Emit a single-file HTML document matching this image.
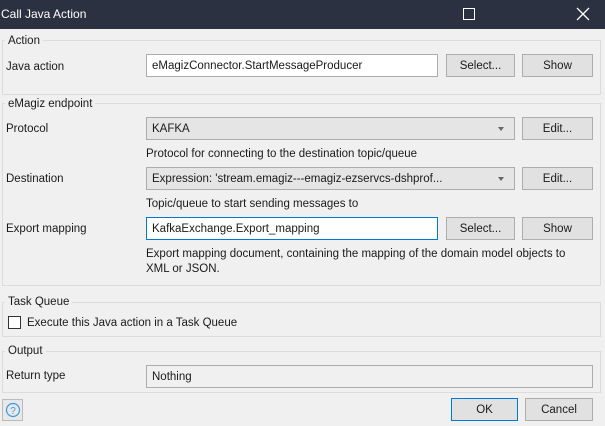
<!DOCTYPE html>
<html><head><style>
*{box-sizing:border-box;margin:0;padding:0}
body{width:605px;height:426px;background:#f0f0f0;font-family:"Liberation Sans",sans-serif;font-size:11.5px;color:#1a1a1a;position:relative;overflow:hidden}
.a{position:absolute;white-space:nowrap}
.tb{left:0;top:0;width:605px;height:29px;background:#2b3140;color:#fff;font-size:12px;line-height:29px;padding-left:1px}
.g{position:absolute;border:1px solid #dcdcdc;left:2px;width:599px}
.gl{position:absolute;background:#f0f0f0;padding:0 3px;left:5px}
.in{position:absolute;border:1px solid #acacac;background:#f0f0f0;height:23px;line-height:23px;padding-left:5px}
.w{background:#fff}
.btn{position:absolute;border:1px solid #adadad;background:#e1e1e1;height:23px;line-height:23px;text-align:center}
.cb{background:#e5e5e5}
.arr{position:absolute;right:10px;top:9px;width:0;height:0;border-left:3px solid transparent;border-right:3px solid transparent;border-top:4px solid #666}
</style></head><body>
<div class="a tb">Call Java Action</div>
<div class="a" style="left:463px;top:8px;width:12px;height:12px;border:1.3px solid #fff"></div>
<svg class="a" style="left:576px;top:7px" width="14" height="14"><path d="M1 1L13 13M13 1L1 13" stroke="#fff" stroke-width="1.3"/></svg>

<div class="g" style="top:40px;height:55px"></div>
<div class="a gl" style="top:35px">Action</div>
<div class="a" style="left:6px;top:61px">Java action</div>
<div class="in w" style="left:146px;top:54px;width:292px">eMagizConnector.StartMessageProducer</div>
<div class="btn" style="left:446px;top:54px;width:69px">Select...</div>
<div class="btn" style="left:522px;top:54px;width:71px">Show</div>

<div class="g" style="top:103px;height:183px"></div>
<div class="a gl" style="top:98px">eMagiz endpoint</div>
<div class="a" style="left:6px;top:123px">Protocol</div>
<div class="in cb" style="left:146px;top:117px;width:369px">KAFKA<div class="arr"></div></div>
<div class="btn" style="left:522px;top:117px;width:71px">Edit...</div>
<div class="a" style="left:146px;top:148px">Protocol for connecting to the destination topic/queue</div>
<div class="a" style="left:6px;top:173px">Destination</div>
<div class="in cb" style="left:146px;top:167px;width:369px">Expression: 'stream.emagiz---emagiz-ezservcs-dshprof...<div class="arr"></div></div>
<div class="btn" style="left:522px;top:167px;width:71px">Edit...</div>
<div class="a" style="left:146px;top:198px">Topic/queue to start sending messages to</div>
<div class="a" style="left:6px;top:223px">Export mapping</div>
<div class="in w" style="left:146px;top:217px;width:292px;border-color:#0078d7">KafkaExchange.Export_mapping</div>
<div class="btn" style="left:446px;top:217px;width:69px">Select...</div>
<div class="btn" style="left:522px;top:217px;width:71px">Show</div>
<div class="a" style="left:146px;top:247px;line-height:15px">Export mapping document, containing the mapping of the domain model objects to<br>XML or JSON.</div>

<div class="g" style="top:302px;height:35px"></div>
<div class="a gl" style="top:296px">Task Queue</div>
<div class="a" style="left:8px;top:316px;width:13px;height:13px;border:1px solid #333;background:#fff"></div>
<div class="a" style="left:27px;top:317px">Execute this Java action in a Task Queue</div>

<div class="g" style="top:351px;height:42px"></div>
<div class="a gl" style="top:345px">Output</div>
<div class="a" style="left:6px;top:370px">Return type</div>
<div class="in" style="left:146px;top:365px;width:447px">Nothing</div>

<div class="a" style="left:2px;top:399px;width:21px;height:22px;border:1px solid #bbb;background:#e8e8e8"></div>
<svg class="a" style="left:5px;top:402px" width="16" height="16"><circle cx="8" cy="8" r="6.5" fill="none" stroke="#3b9ae1" stroke-width="1.2"/><text x="8" y="12" text-anchor="middle" font-size="10" fill="#3b9ae1" font-family="Liberation Sans">?</text></svg>
<div class="btn" style="left:451px;top:398px;width:67px;border-color:#0078d7">OK</div>
<div class="btn" style="left:525px;top:398px;width:68px">Cancel</div>
</body></html>
